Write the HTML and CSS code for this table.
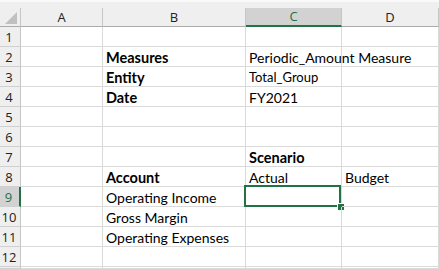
FILE: index.html
```html
<!DOCTYPE html>
<html>
<head>
<meta charset="utf-8">
<link rel="stylesheet" href="styles.css">
</head>
<body>
<div class="topband"></div>
<div class="sheet">
  <div class="corner"><span class="tri"></span></div>
  <div class="colhead">A</div>
  <div class="colhead">B</div>
  <div class="colhead sel">C</div>
  <div class="colhead">D</div>

  <div class="rowhead">1</div><div class="cell"></div><div class="cell"></div><div class="cell"></div><div class="cell"></div>
  <div class="rowhead">2</div><div class="cell"></div><div class="cell b">Measures</div><div class="cell">Periodic_Amount Measure</div><div class="cell"></div>
  <div class="rowhead">3</div><div class="cell"></div><div class="cell b">Entity</div><div class="cell small">Total_Group</div><div class="cell"></div>
  <div class="rowhead">4</div><div class="cell"></div><div class="cell b">Date</div><div class="cell">FY2021</div><div class="cell"></div>
  <div class="rowhead">5</div><div class="cell"></div><div class="cell"></div><div class="cell"></div><div class="cell"></div>
  <div class="rowhead">6</div><div class="cell"></div><div class="cell"></div><div class="cell"></div><div class="cell"></div>
  <div class="rowhead">7</div><div class="cell"></div><div class="cell"></div><div class="cell b">Scenario</div><div class="cell"></div>
  <div class="rowhead">8</div><div class="cell"></div><div class="cell b">Account</div><div class="cell">Actual</div><div class="cell">Budget</div>
  <div class="rowhead sel">9</div><div class="cell"></div><div class="cell">Operating Income</div><div class="cell active"></div><div class="cell"></div>
  <div class="rowhead">10</div><div class="cell"></div><div class="cell">Gross Margin</div><div class="cell"></div><div class="cell"></div>
  <div class="rowhead">11</div><div class="cell"></div><div class="cell">Operating Expenses</div><div class="cell"></div><div class="cell"></div>
  <div class="rowhead">12</div><div class="cell"></div><div class="cell"></div><div class="cell"></div><div class="cell"></div>
  <div class="rowhead"></div><div class="cell"></div><div class="cell"></div><div class="cell"></div><div class="cell"></div>
</div>
</body>
</html>
```

FILE: styles.css
```css
html, body {
  margin: 0;
  padding: 0;
  background: #ffffff;
  overflow: hidden;
  width: 439px;
  height: 269px;
}
body {
  font-family: "Lato", "Open Sans", sans-serif;
  color: #000;
}
.topband {
  height: 8px;
  box-sizing: border-box;
  background: #efefef;
  border-top: 2px solid #f9f9f9;
}
.sheet {
  display: grid;
  grid-template-columns: 21px 82px 143px 96px 97px;
  grid-template-rows: 19px repeat(12, 20px) 2px;
  overflow: hidden;
}
.corner {
  background: #efefef;
  border-right: 1px solid #c6c6c6;
  border-bottom: 1px solid #ababab;
  box-sizing: border-box;
  position: relative;
}
.tri {
  position: absolute;
  right: 3px;
  bottom: 2px;
  width: 0;
  height: 0;
  border-left: 12px solid transparent;
  border-bottom: 12px solid #c0c0c0;
}
.colhead {
  background: #efefef;
  border-right: 1px solid #c6c6c6;
  border-bottom: 1px solid #ababab;
  box-sizing: border-box;
  text-align: center;
  font-family: "Open Sans", sans-serif;
  font-size: 13px;
  line-height: 18px;
  color: #222;
}
.colhead.sel {
  background: #d2d2d2;
  border-bottom: 2px solid #217346;
  color: #217346;
  line-height: 17px;
}
.rowhead {
  background: #efefef;
  border-right: 1px solid #c6c6c6;
  border-bottom: 1px solid #d0d0d0;
  box-sizing: border-box;
  text-align: center;
  font-family: "Open Sans", sans-serif;
  font-size: 13px;
  line-height: 20px;
  color: #222;
  padding-right: 2px;
}
.rowhead.sel {
  background: #d2d2d2;
  border-right: 2px solid #217346;
  color: #217346;
}
.cell {
  border-right: 1px solid #dadada;
  border-bottom: 1px solid #dadada;
  box-sizing: border-box;
  white-space: nowrap;
  font-size: 14px;
  line-height: 19px;
  padding: 1px 0 0 3px;
  position: relative;
  z-index: 0;
}
.cell.b {
  font-weight: bold;
  font-size: 14.5px;
}
.cell.small {
  font-size: 13px;
}
.cell.active::after {
  content: "";
  position: absolute;
  left: -2px;
  top: -2px;
  width: 97px;
  height: 22px;
  box-sizing: border-box;
  border: 2px solid #217346;
  z-index: 2;
}
.cell.active::before {
  content: "";
  position: absolute;
  right: -3px;
  bottom: -4px;
  width: 6px;
  height: 6px;
  background: #217346;
  border: 1px solid #fff;
  border-width: 1px 0 0 1px;
  z-index: 3;
}
```
